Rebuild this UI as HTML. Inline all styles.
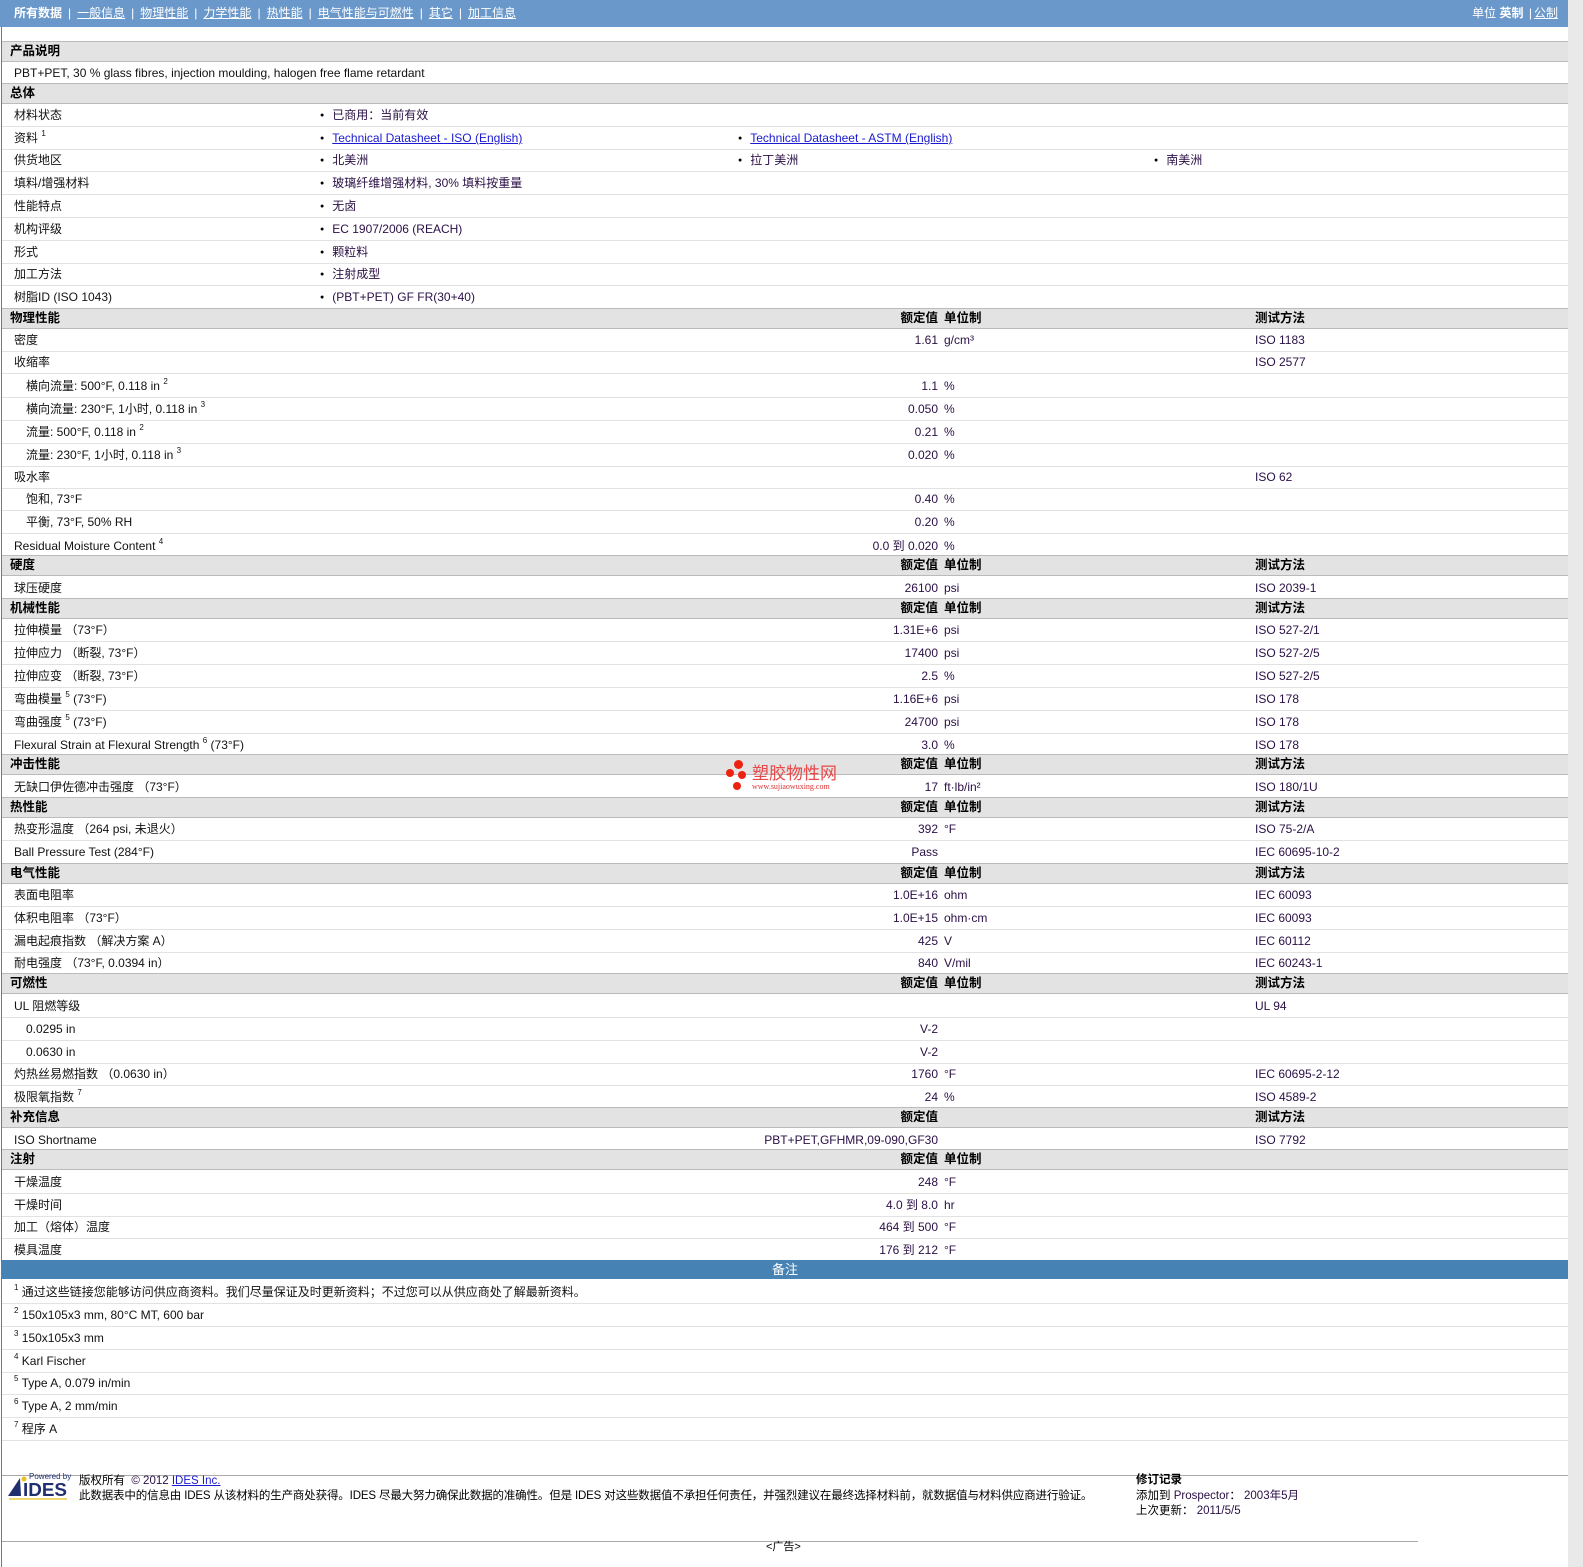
<!DOCTYPE html>
<html><head><meta charset="utf-8"><style>
body{margin:0;width:1583px;height:1567px;background:#fff;position:relative;overflow:hidden;font-family:"Liberation Sans","Noto Sans CJK SC",sans-serif;font-size:12px;color:#2a0f45}
.nav{position:absolute;left:0;top:0;width:1568px;height:27px;background:#6a98cb;color:#fff;font-size:12px;line-height:27px}
.nav a{color:#fff;text-decoration:underline}
.nav .s{margin:0 6px}
.side{position:absolute;left:1568px;top:0;width:15px;height:1567px;background:#e9e9e9}
.lb{position:absolute;left:1px;top:27px;width:1px;height:1540px;background:#777}
.h,.r{position:absolute;left:2px;width:1566px}
.h{height:19px;background:#e3e3e3;border-top:1px solid #bbb;border-bottom:1px solid #bbb;font-weight:bold;color:#000;line-height:19px;font-size:12.5px}
.r{height:22px;border-bottom:1px solid #e2e2e2;line-height:22px}
.h span,.r span{position:absolute;white-space:nowrap}
.l{left:12px;color:#111}
.ls{left:24px;color:#111}
.h .l{left:8px;color:#000}
.v{right:630px;text-align:right}
.u{left:942px}
.t{left:1253px}
.b1{left:318px}.b2{left:736px}.b3{left:1152px}
.b1:before,.b2:before,.b3:before{content:"●";font-size:7px;margin-right:8px;vertical-align:2px;color:#000}
.lk{color:#1a1ad0;text-decoration:underline}
sup{font-size:8px;vertical-align:6px;line-height:0}
.note{position:absolute;left:2px;top:1260px;width:1566px;height:19px;background:#4682b4;color:#fff;text-align:center;font-size:13px;line-height:19px}
.f{position:absolute;white-space:nowrap;color:#000;font-size:11.5px}
</style></head><body>
<div class="nav"><span style="margin-left:14px;font-weight:bold">所有数据</span><span class="s">|</span><a>一般信息</a><span class="s">|</span><a>物理性能</a><span class="s">|</span><a>力学性能</a><span class="s">|</span><a>热性能</a><span class="s">|</span><a>电气性能与可燃性</a><span class="s">|</span><a>其它</a><span class="s">|</span><a>加工信息</a>
<span style="position:absolute;right:10px;top:0">单位 <b>英制</b> <span style="margin:0 2px">|</span><a>公制</a></span></div>
<div class="side"></div><div class="lb"></div>

<div class="h" style="top:41px"><span class="l">产品说明</span></div>
<div class="r" style="top:62px"><span class="l">PBT+PET, 30 % glass fibres, injection moulding, halogen free flame retardant</span></div>
<div class="h" style="top:83px"><span class="l">总体</span></div>
<div class="r" style="top:104px"><span class="l">材料状态</span><span class="b1">已商用：当前有效</span></div>
<div class="r" style="top:127px"><span class="l">资料 <sup>1</sup></span><span class="b1"><span class="lk" style="position:static">Technical Datasheet - ISO (English)</span></span><span class="b2"><span class="lk" style="position:static">Technical Datasheet - ASTM (English)</span></span></div>
<div class="r" style="top:149px"><span class="l">供货地区</span><span class="b1">北美洲</span><span class="b2">拉丁美洲</span><span class="b3">南美洲</span></div>
<div class="r" style="top:172px"><span class="l">填料/增强材料</span><span class="b1">玻璃纤维增强材料, 30% 填料按重量</span></div>
<div class="r" style="top:195px"><span class="l">性能特点</span><span class="b1">无卤</span></div>
<div class="r" style="top:218px"><span class="l">机构评级</span><span class="b1">EC 1907/2006 (REACH)</span></div>
<div class="r" style="top:241px"><span class="l">形式</span><span class="b1">颗粒料</span></div>
<div class="r" style="top:263px"><span class="l">加工方法</span><span class="b1">注射成型</span></div>
<div class="r" style="top:286px"><span class="l">树脂ID (ISO 1043)</span><span class="b1">(PBT+PET) GF FR(30+40)</span></div>

<div class="h" style="top:308px"><span class="l">物理性能</span><span class="v">额定值</span><span class="u">单位制</span><span class="t">测试方法</span></div>
<div class="r" style="top:329px"><span class="l">密度</span><span class="v">1.61</span><span class="u">g/cm³</span><span class="t">ISO 1183</span></div>
<div class="r" style="top:351px"><span class="l">收缩率</span><span class="t">ISO 2577</span></div>
<div class="r" style="top:375px"><span class="ls">横向流量: 500°F, 0.118 in <sup>2</sup></span><span class="v">1.1</span><span class="u">%</span></div>
<div class="r" style="top:398px"><span class="ls">横向流量: 230°F, 1小时, 0.118 in <sup>3</sup></span><span class="v">0.050</span><span class="u">%</span></div>
<div class="r" style="top:421px"><span class="ls">流量: 500°F, 0.118 in <sup>2</sup></span><span class="v">0.21</span><span class="u">%</span></div>
<div class="r" style="top:444px"><span class="ls">流量: 230°F, 1小时, 0.118 in <sup>3</sup></span><span class="v">0.020</span><span class="u">%</span></div>
<div class="r" style="top:466px"><span class="l">吸水率</span><span class="t">ISO 62</span></div>
<div class="r" style="top:488px"><span class="ls">饱和, 73°F</span><span class="v">0.40</span><span class="u">%</span></div>
<div class="r" style="top:511px"><span class="ls">平衡, 73°F, 50% RH</span><span class="v">0.20</span><span class="u">%</span></div>
<div class="r" style="top:535px"><span class="l">Residual Moisture Content <sup>4</sup></span><span class="v">0.0 到 0.020</span><span class="u">%</span></div>

<div class="h" style="top:555px"><span class="l">硬度</span><span class="v">额定值</span><span class="u">单位制</span><span class="t">测试方法</span></div>
<div class="r" style="top:577px"><span class="l">球压硬度</span><span class="v">26100</span><span class="u">psi</span><span class="t">ISO 2039-1</span></div>

<div class="h" style="top:598px"><span class="l">机械性能</span><span class="v">额定值</span><span class="u">单位制</span><span class="t">测试方法</span></div>
<div class="r" style="top:619px"><span class="l">拉伸模量 （73°F）</span><span class="v">1.31E+6</span><span class="u">psi</span><span class="t">ISO 527-2/1</span></div>
<div class="r" style="top:642px"><span class="l">拉伸应力 （断裂, 73°F）</span><span class="v">17400</span><span class="u">psi</span><span class="t">ISO 527-2/5</span></div>
<div class="r" style="top:665px"><span class="l">拉伸应变 （断裂, 73°F）</span><span class="v">2.5</span><span class="u">%</span><span class="t">ISO 527-2/5</span></div>
<div class="r" style="top:688px"><span class="l">弯曲模量 <sup>5</sup> (73°F)</span><span class="v">1.16E+6</span><span class="u">psi</span><span class="t">ISO 178</span></div>
<div class="r" style="top:711px"><span class="l">弯曲强度 <sup>5</sup> (73°F)</span><span class="v">24700</span><span class="u">psi</span><span class="t">ISO 178</span></div>
<div class="r" style="top:734px"><span class="l">Flexural Strain at Flexural Strength <sup>6</sup> (73°F)</span><span class="v">3.0</span><span class="u">%</span><span class="t">ISO 178</span></div>

<div class="h" style="top:754px"><span class="l">冲击性能</span><span class="v">额定值</span><span class="u">单位制</span><span class="t">测试方法</span></div>
<div class="r" style="top:776px"><span class="l">无缺口伊佐德冲击强度 （73°F）</span><span class="v">17</span><span class="u">ft·lb/in²</span><span class="t">ISO 180/1U</span></div>

<div class="h" style="top:797px"><span class="l">热性能</span><span class="v">额定值</span><span class="u">单位制</span><span class="t">测试方法</span></div>
<div class="r" style="top:818px"><span class="l">热变形温度 （264 psi, 未退火）</span><span class="v">392</span><span class="u">°F</span><span class="t">ISO 75-2/A</span></div>
<div class="r" style="top:841px"><span class="l">Ball Pressure Test (284°F)</span><span class="v">Pass</span><span class="t">IEC 60695-10-2</span></div>

<div class="h" style="top:863px"><span class="l">电气性能</span><span class="v">额定值</span><span class="u">单位制</span><span class="t">测试方法</span></div>
<div class="r" style="top:884px"><span class="l">表面电阻率</span><span class="v">1.0E+16</span><span class="u">ohm</span><span class="t">IEC 60093</span></div>
<div class="r" style="top:907px"><span class="l">体积电阻率 （73°F）</span><span class="v">1.0E+15</span><span class="u">ohm·cm</span><span class="t">IEC 60093</span></div>
<div class="r" style="top:930px"><span class="l">漏电起痕指数 （解决方案 A）</span><span class="v">425</span><span class="u">V</span><span class="t">IEC 60112</span></div>
<div class="r" style="top:952px"><span class="l">耐电强度 （73°F, 0.0394 in）</span><span class="v">840</span><span class="u">V/mil</span><span class="t">IEC 60243-1</span></div>

<div class="h" style="top:973px"><span class="l">可燃性</span><span class="v">额定值</span><span class="u">单位制</span><span class="t">测试方法</span></div>
<div class="r" style="top:995px"><span class="l">UL 阻燃等级</span><span class="t">UL 94</span></div>
<div class="r" style="top:1018px"><span class="ls">0.0295 in</span><span class="v">V-2</span></div>
<div class="r" style="top:1041px"><span class="ls">0.0630 in</span><span class="v">V-2</span></div>
<div class="r" style="top:1063px"><span class="l">灼热丝易燃指数 （0.0630 in）</span><span class="v">1760</span><span class="u">°F</span><span class="t">IEC 60695-2-12</span></div>
<div class="r" style="top:1086px"><span class="l">极限氧指数 <sup>7</sup></span><span class="v">24</span><span class="u">%</span><span class="t">ISO 4589-2</span></div>

<div class="h" style="top:1107px"><span class="l">补充信息</span><span class="v">额定值</span><span class="t">测试方法</span></div>
<div class="r" style="top:1129px"><span class="l">ISO Shortname</span><span class="v">PBT+PET,GFHMR,09-090,GF30</span><span class="t">ISO 7792</span></div>

<div class="h" style="top:1149px"><span class="l">注射</span><span class="v">额定值</span><span class="u">单位制</span></div>
<div class="r" style="top:1171px"><span class="l">干燥温度</span><span class="v">248</span><span class="u">°F</span></div>
<div class="r" style="top:1194px"><span class="l">干燥时间</span><span class="v">4.0 到 8.0</span><span class="u">hr</span></div>
<div class="r" style="top:1216px"><span class="l">加工（熔体）温度</span><span class="v">464 到 500</span><span class="u">°F</span></div>
<div class="r" style="top:1239px"><span class="l">模具温度</span><span class="v">176 到 212</span><span class="u">°F</span></div>

<div class="note">备注</div>
<div class="r" style="top:1281px"><span class="l"><sup>1</sup> 通过这些链接您能够访问供应商资料。我们尽量保证及时更新资料；不过您可以从供应商处了解最新资料。</span></div>
<div class="r" style="top:1304px"><span class="l"><sup>2</sup> 150x105x3 mm, 80°C MT, 600 bar</span></div>
<div class="r" style="top:1327px"><span class="l"><sup>3</sup> 150x105x3 mm</span></div>
<div class="r" style="top:1350px"><span class="l"><sup>4</sup> Karl Fischer</span></div>
<div class="r" style="top:1372px"><span class="l"><sup>5</sup> Type A, 0.079 in/min</span></div>
<div class="r" style="top:1395px"><span class="l"><sup>6</sup> Type A, 2 mm/min</span></div>
<div class="r" style="top:1418px"><span class="l"><sup>7</sup> 程序 A</span></div>

<div style="position:absolute;left:2px;top:1475px;width:1566px;height:1px;background:#aaa"></div>
<div style="position:absolute;left:2px;top:1541px;width:1416px;height:1px;background:#aaa"></div>

<svg style="position:absolute;left:6px;top:1471px" width="66" height="30" viewBox="0 0 66 30">
<text x="23" y="8" font-family="Liberation Sans" font-size="8" fill="#1f2f6f">Powered by</text>
<polygon points="2,25 14,7 15,25" fill="#1f2f6f"/>
<circle cx="18" cy="8" r="2.5" fill="#e8c020"/>
<text x="17" y="25" font-family="Liberation Sans" font-weight="bold" font-size="18" fill="#1f2f6f" textLength="44" lengthAdjust="spacingAndGlyphs">IDES</text>
<rect x="3" y="27" width="58" height="2" fill="#f0d870"/>
</svg>
<div class="f" style="left:79px;top:1472px">版权所有 &nbsp;<span style="color:#2a0f45">© 2012 </span><span class="lk">IDES Inc.</span></div>
<div class="f" style="left:79px;top:1487px;letter-spacing:-0.15px">此数据表中的信息由 IDES 从该材料的生产商处获得。IDES 尽最大努力确保此数据的准确性。但是 IDES 对这些数据值不承担任何责任，并强烈建议在最终选择材料前，就数据值与材料供应商进行验证。</div>
<div class="f" style="left:1136px;top:1471px;font-weight:bold">修订记录</div>
<div class="f" style="left:1136px;top:1487px">添加到 <span style="color:#2a0f45">Prospector</span>： <span style="color:#2a0f45">2003年5月</span></div>
<div class="f" style="left:1136px;top:1502px">上次更新： <span style="color:#2a0f45">2011/5/5</span></div>
<div class="f" style="left:766px;top:1538px;font-size:11px">&lt;广告&gt;</div>

<div style="position:absolute;left:722px;top:758px;width:130px;height:36px">
<div style="position:absolute;left:12px;top:2px;width:9px;height:9px;border-radius:50%;background:#e21"></div>
<div style="position:absolute;left:4px;top:11px;width:8px;height:8px;border-radius:50%;background:#e21"></div>
<div style="position:absolute;left:16px;top:13px;width:8px;height:8px;border-radius:50%;background:#e21"></div>
<div style="position:absolute;left:11px;top:24px;width:8px;height:8px;border-radius:50%;background:#e21"></div>
<div style="position:absolute;left:30px;top:4px;font-size:17px;color:#e84848;white-space:nowrap;font-family:'Noto Sans CJK SC',sans-serif;line-height:20px">塑胶物性网</div>
<div style="position:absolute;left:30px;top:24px;font-size:8px;color:#d33;white-space:nowrap;font-family:'Liberation Serif',serif">www.sujiaowuxing.com</div>
</div>
</body></html>
